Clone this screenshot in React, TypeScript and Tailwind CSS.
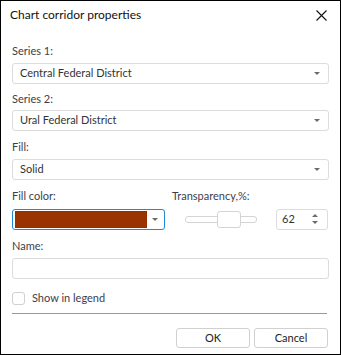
import React, { useState } from 'react';

const Arrow: React.FC<{ up?: boolean }> = ({ up }) => (
  <svg width="6" height="3" viewBox="0 0 6 3" className="shrink-0">
    <path d={up ? 'M0 3 H6 L3 0 Z' : 'M0 0 H6 L3 3 Z'} fill="#6b6b6b" />
  </svg>
);

const Select: React.FC<{ value: string }> = ({ value }) => (
  <div className="flex items-center justify-between h-[21px] border border-[#dcdcdc] rounded-[3px] bg-white pl-[7px] pr-[8px] text-[11px] text-[#333]">
    <span>{value}</span>
    <Arrow />
  </div>
);

const Label: React.FC<{ text: string; className?: string }> = ({ text, className }) => (
  <div className={`h-[16px] leading-[16px] text-[11px] text-[#3d3d4a] ${className ?? ''}`}>{text}</div>
);

const App: React.FC = () => {
  const [checked, setChecked] = useState(false);

  return (
    <div
      className="w-[341px] h-[355px] border border-black bg-white flex flex-col"
      style={{ fontFamily: 'Lato, "Noto Sans", sans-serif' }}
    >
      {/* Title bar */}
      <div className="h-[28px] flex items-center justify-between pl-[9px] pr-[13px]">
        <span className="text-[12px] text-[#111]">Chart corridor properties</span>
        <svg width="11" height="11" viewBox="0 0 11 11">
          <path d="M0.5 0.5 L10.5 10.5 M10.5 0.5 L0.5 10.5" stroke="#111" strokeWidth="1.1" />
        </svg>
      </div>

      <div className="flex flex-col px-[11px]">
        <Label text="Series 1:" className="mt-[14px]" />
        <div className="mt-[4px]">
          <Select value="Central Federal District" />
        </div>

        <Label text="Series 2:" className="mt-[7px]" />
        <div className="mt-[3px]">
          <Select value="Ural Federal District" />
        </div>

        <Label text="Fill:" className="mt-[8px]" />
        <div className="mt-[4px]">
          <Select value="Solid" />
        </div>

        {/* Fill color / transparency */}
        <div className="mt-[8px] flex">
          <Label text="Fill color:" className="w-[160px]" />
          <Label text="Transparency,%:" />
        </div>
        <div className="mt-[4px] flex items-center h-[22px]">
          <div className="w-[153px] h-[21px] border border-[#1c8ad6] rounded-[3px] flex items-center pl-[2px] pr-[6px]">
            <div className="w-[132px] h-[17px] border border-dotted border-[#444] bg-[#993300]" />
            <div className="flex-1 flex justify-end">
              <Arrow />
            </div>
          </div>

          {/* Slider */}
          <div className="ml-[20px] relative w-[72px] h-[17px] flex items-center">
            <div className="w-full h-[7px] border border-[#d4d4d4] rounded-[3px] bg-white" />
            <div className="absolute left-[32px] top-0 w-[24px] h-[17px] border border-[#d4d4d4] rounded-[3px] bg-white" />
          </div>

          {/* Spin box */}
          <div className="ml-[19px] w-[52px] h-[21px] border border-[#dcdcdc] rounded-[3px] flex items-center justify-between pl-[5px] pr-[9px] text-[11px] text-[#333]">
            <span>62</span>
            <div className="flex flex-col gap-[4px]">
              <Arrow up />
              <Arrow />
            </div>
          </div>
        </div>

        <Label text="Name:" className="mt-[8px]" />
        <input className="mt-[4px] h-[21px] border border-[#dcdcdc] rounded-[3px] outline-none px-[6px] text-[11px]" />

        {/* Show in legend */}
        <label className="mt-[11px] flex items-center h-[16px] cursor-pointer">
          <span
            onClick={() => setChecked(!checked)}
            className="w-[13px] h-[13px] border border-[#d0d0d0] rounded-[3px] bg-white flex items-center justify-center"
          >
            {checked && <span className="w-[7px] h-[7px] bg-[#333]" />}
          </span>
          <span className="ml-[7px] text-[11px] text-[#3d3d4a]">Show in legend</span>
        </label>

        <div className="mt-[7px] h-px bg-[#9a9a9a] mr-[2px]" />

        <div className="mt-[14px] flex justify-end gap-[4px] pr-[1px]">
          <button className="w-[74px] h-[20px] border border-[#d0d0d0] rounded-[3px] bg-white text-[11px] text-[#222]">
            OK
          </button>
          <button className="w-[74px] h-[20px] border border-[#d0d0d0] rounded-[3px] bg-white text-[11px] text-[#222]">
            Cancel
          </button>
        </div>
      </div>
    </div>
  );
};

export default App;
